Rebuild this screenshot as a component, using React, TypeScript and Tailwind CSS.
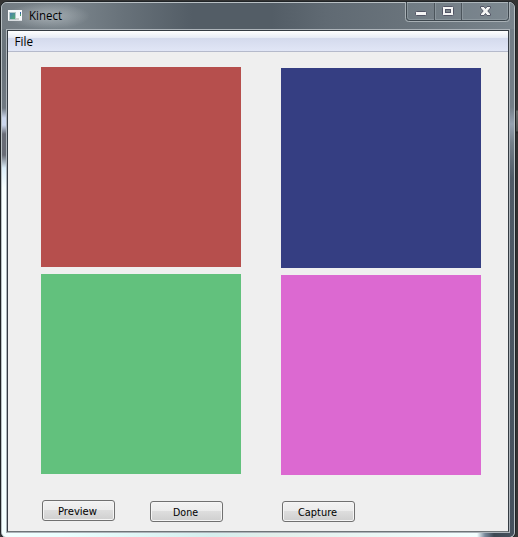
import React from 'react';

function AppIcon() {
  return (
    <svg className="relative block" width="14" height="12" viewBox="0 0 14 12" shapeRendering="crispEdges">
      <defs>
        <linearGradient id="tile" x1="0" y1="0" x2="1" y2="1">
          <stop offset="0" stopColor="#4a7fae" />
          <stop offset="1" stopColor="#55ad72" />
        </linearGradient>
      </defs>
      <rect y="1" width="14" height="11" fill="#d9dde1" />
      <rect x="0" y="1" width="14" height="10" fill="#f7f8fa" />
      <rect x="1" y="3" width="7" height="8" fill="#b5c6c9" />
      <rect x="2" y="4" width="5" height="6" fill="url(#tile)" />
      <rect x="12" y="3" width="1" height="2" fill="#3567a5" />
      <rect x="12" y="5" width="1" height="2" fill="#4a9d70" />
      <rect x="8" y="9" width="3" height="2" fill="#cfcfcf" />
    </svg>
  );
}

function CaptionButtons() {
  return (
    <svg className="absolute left-[405px] top-[2px]" width="106" height="21" viewBox="0 0 106 21">
      <path d="M.5 0V16.5Q.5 19.5 3.5 19.5H101.5Q104.5 19.5 104.5 16.5V0" fill="#8c969d" fillOpacity=".24" stroke="#a8b0b5" />
      <path d="M1.5 0V15.5Q1.5 18.5 4.5 18.5H100.5Q103.5 18.5 103.5 15.5V0" fill="none" stroke="#3d464d" />
      <path d="M2.5 1V15Q2.5 17.5 5 17.5H100Q102.5 17.5 102.5 15V1M30.5 1V17M57.5 1V17" fill="none" stroke="#929ca3" strokeOpacity=".75" />
      <path d="M29.5 1V18M56.5 1V18" stroke="#4b545b" />
      <rect x="10.5" y="9.5" width="11" height="4" rx="1" fill="#f5f5f5" stroke="#535666" />
      <rect x="37.5" y="4.5" width="11" height="9" rx="1" fill="#f5f5f5" stroke="#535666" />
      <rect x="40.5" y="7.5" width="5" height="3" fill="#7d858b" stroke="#535666" />
      <path d="M75.5 4.5H79L80.5 6.5L82 4.5H85.5V6L82.8 9L85.5 12V13.5H82L80.5 11.5L79 13.5H75.5V12L78.2 9L75.5 6Z" fill="#f5f5f5" stroke="#535666" />
    </svg>
  );
}

function PushButton({ label, className, textLength }: { label: string; className: string; textLength: number }) {
  return (
    <button className={`block h-[21px] w-[73px] rounded-[3px] border border-[#707070] bg-[linear-gradient(#f2f2f2_0%,#ebebeb_50%,#dddddd_50%,#cfcfcf_100%)] p-0 shadow-[inset_0_0_0_1px_#f5f5f5] ${className}`}>
      <svg className="block" width="71" height="19">
        <text x="34.5" y="14" textAnchor="middle" textLength={textLength} lengthAdjust="spacingAndGlyphs" className="fill-black font-['DejaVu_Sans_Condensed','DejaVu_Sans',sans-serif] text-[11px]">
          {label}
        </text>
      </svg>
    </button>
  );
}

export default function App() {
  return (
    <div className="relative flex h-[537px] w-[518px] overflow-hidden bg-[linear-gradient(#333_0px,#373737_110px,#646866_111px,#4b4e4d_131px,#222_132px,#303030_134px,#363636_537px)] pt-px">
      <div className="flex h-[538px] w-[516px] flex-col rounded-[7px] border border-[#202427] bg-[#737e87]">
        <div className="relative flex h-[536px] w-[514px] flex-col overflow-hidden rounded-[6px] border border-[#b9c0c4] bg-[linear-gradient(#6f7980_0px,#69737b_60px,#707982_105px,#ccd7ed_115px,#ccd7ed_122px,#686c76_131px,#686c76_152px,#dceefa_165px,#f8ffff_185px,#f3ffff_536px)]">
          <div className="absolute right-0 top-0 h-full w-[5px] bg-[linear-gradient(#737e87_0px,#737e87_104px,#96a2b1_121px,#747f89_140px,#4f5b67_175px,#45515d_536px)]" />
          <div className="absolute bottom-0 left-0 h-[5px] w-full bg-[linear-gradient(90deg,#f3ffff_0px,#eaffff_60px,#d5eeee_210px,#e2efeb_270px,#f3ffff_475px,#78889a_483px,#3d4853_492px,#47535f_514px)]" />
          <header className="relative flex h-[26px] w-full items-start bg-[linear-gradient(90deg,#727b82_0px,#7b858c_65px,#68727a_120px,#535d66_190px,#535d66_270px,#606a73_325px,#6b757d_420px,#7a858d_514px)] pl-[6px] pt-[6px]">
            <div className="absolute left-[4px] top-0 h-[26px] w-[84px] bg-[radial-gradient(closest-side,#c4cbcf99,#c4cbcf4d_50%,#c4cbcf00)]" />
            <AppIcon />
            <svg className="relative -mt-[4px] ml-[6px] block" width="48" height="22">
              <text x="1" y="15" textLength="33" lengthAdjust="spacingAndGlyphs" className="fill-black font-['Open_Sans','Noto_Sans',sans-serif] text-[12px]">Kinect</text>
            </svg>
          </header>
          <div className="relative ml-1 h-[504px] w-[504px] shrink-0 border border-[#adb4ba]">
            <div className="h-[502px] w-[502px] border border-[#343b43] border-b-[#6e7477] bg-[#efefef]">
              <nav className="h-[21px] border-b border-[#b5bacb] bg-[linear-gradient(#ffffff_0px,#e6ebf5_7px,#d4daed_7px,#e1e6f6_20px)]">
                <svg className="block" width="60" height="20">
                  <text x="6.5" y="15" textLength="18.5" lengthAdjust="spacingAndGlyphs" className="fill-black font-['Open_Sans','Noto_Sans',sans-serif] text-[12px]">File</text>
                </svg>
              </nav>
              <main className="flex h-[479px] gap-[40px] pl-[33px]">
                <section className="w-[200px] pt-[15px]">
                  <div className="h-[200px] bg-[#b64f4d]" />
                  <div className="mt-[7px] h-[200px] bg-[#62c17d]" />
                  <div className="mt-[26px] flex items-start gap-[35px] pl-px">
                    <PushButton label="Preview" className="" textLength={39} />
                    <PushButton label="Done" className="mt-px" textLength={25} />
                  </div>
                </section>
                <section className="w-[200px] pt-[16px]">
                  <div className="h-[200px] bg-[#353e82]" />
                  <div className="mt-[7px] h-[200px] bg-[#dc69d1]" />
                  <PushButton label="Capture" className="ml-px mt-[26px]" textLength={39} />
                </section>
              </main>
            </div>
          </div>
        </div>
      </div>
      <CaptionButtons />
    </div>
  );
}
